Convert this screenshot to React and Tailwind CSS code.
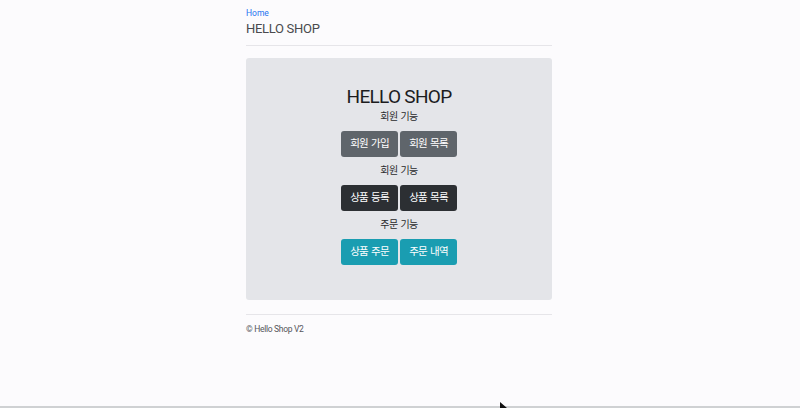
// Hello Shop 메인 화면
const FONT = { fontFamily: 'Roboto, "Noto Sans CJK KR", sans-serif' }

const GRUPOS = [
  { titulo: '회원 기능', botones: ['회원 가입', '회원 목록'], color: 'bg-[#5f656b]' },
  { titulo: '회원 기능', botones: ['상품 등록', '상품 목록'], color: 'bg-[#2c2f33]' },
  { titulo: '주문 기능', botones: ['상품 주문', '주문 내역'], color: 'bg-[#1a9db1]' },
]

export default function App() {
  return (
    <div style={FONT} className="relative h-[408px] w-[800px] overflow-hidden bg-[#fcfbfd]">
      <div className="ml-[246px] w-[306px] pt-[8px]">
        {/* Encabezado */}
        <a className="block text-[8.5px] leading-[10px] text-[#1f74f0]">Home</a>
        <h1 className="mt-[3px] text-[13px] leading-[16px] tracking-[-0.3px] text-[#4a4a4e]">HELLO SHOP</h1>
        <div className="mt-[8px] h-px bg-[#e6e5e9]" />

        {/* Jumbotron */}
        <div className="mt-[12px] flex h-[242px] flex-col items-center rounded-[3px] bg-[#e4e5e9] pt-[27px]">
          <h2 className="text-[19px] leading-[24px] tracking-[-0.7px] text-[#1c1c1e]">HELLO SHOP</h2>
          {GRUPOS.map((g, i) => (
            <div key={i} className="flex flex-col items-center">
              <p className={`text-[10px] leading-[14px] tracking-[-0.6px] [word-spacing:1px] text-[#2a2a2c] ${i === 0 ? 'mt-[1px]' : 'mt-[7px]'}`}>
                {g.titulo}
              </p>
              <div className="mt-[7px] flex gap-[2px]">
                {g.botones.map((b) => (
                  <button
                    key={b}
                    className={`h-[26px] w-[57px] rounded-[3px] text-[10.5px] tracking-[-0.7px] [word-spacing:1px] text-white ${g.color}`}
                  >
                    {b}
                  </button>
                ))}
              </div>
            </div>
          ))}
        </div>

        {/* Footer */}
        <div className="mt-[14px] h-px bg-[#e6e5e9]" />
        <p className="mt-[9px] text-[8.5px] leading-[10px] tracking-[-0.3px] text-[#55555a]">© Hello Shop V2</p>
      </div>

      {/* línea inferior y cursor */}
      <div className="absolute bottom-0 left-0 h-[2px] w-full bg-[#cfd1d3]" />
      <svg className="absolute left-[500px] top-[402px]" width="8" height="10" viewBox="0 0 8 10">
        <path d="M0 0 L0 9 L2.5 6.5 L4.5 10 L6 9.3 L4 6 L7 6 Z" fill="#111" />
      </svg>
    </div>
  )
}
